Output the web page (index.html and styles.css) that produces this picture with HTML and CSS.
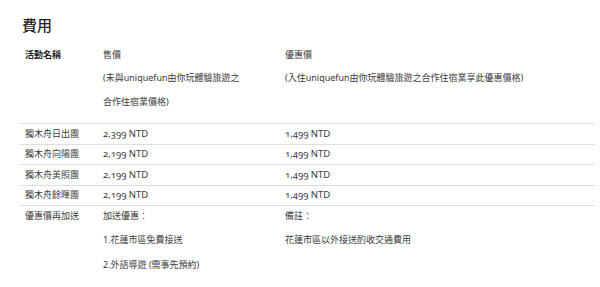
FILE: index.html
```html
<!DOCTYPE html>
<html lang="zh-Hant">
<head>
<meta charset="utf-8">
<title>費用</title>
<link rel="stylesheet" href="styles.css">
</head>
<body>
<section class="fees">
  <h2 class="fees-title">費用</h2>
  <table class="fee-table">
    <colgroup>
      <col class="col-name">
      <col class="col-price">
      <col class="col-deal">
    </colgroup>
    <tr class="head-row">
      <td class="head-name">活動名稱</td>
      <td>
        <div class="lines">
          <p>售價</p>
          <p>(未與uniquefun由你玩體驗旅遊之</p>
          <p>合作住宿業價格)</p>
        </div>
      </td>
      <td>
        <div class="lines">
          <p>優惠價</p>
          <p>(入住uniquefun由你玩體驗旅遊之合作住宿業享此優惠價格)</p>
        </div>
      </td>
    </tr>
    <tr>
      <td>獨木舟日出團</td>
      <td class="num">2,399 NTD</td>
      <td class="num">1,499 NTD</td>
    </tr>
    <tr>
      <td>獨木舟向陽團</td>
      <td class="num">2,199 NTD</td>
      <td class="num">1,499 NTD</td>
    </tr>
    <tr>
      <td>獨木舟美照團</td>
      <td class="num">2,199 NTD</td>
      <td class="num">1,499 NTD</td>
    </tr>
    <tr>
      <td>獨木舟餘暉團</td>
      <td class="num">2,199 NTD</td>
      <td class="num">1,499 NTD</td>
    </tr>
    <tr>
      <td>優惠價再加送</td>
      <td>
        <div class="lines">
          <p>加送優惠：</p>
          <p>1.花蓮市區免費接送</p>
          <p>2.外語導遊 (需事先預約)</p>
        </div>
      </td>
      <td>
        <div class="lines">
          <p>備註：</p>
          <p>花蓮市區以外接送酌收交通費用</p>
        </div>
      </td>
    </tr>
  </table>
</section>
</body>
</html>
```

FILE: styles.css
```css
html, body {
  margin: 0;
  padding: 0;
  background: #ffffff;
}

body {
  font-family: "Noto Sans", "Noto Sans CJK TC", sans-serif;
  color: #3a3a3a;
  font-size: 9px;
}

.fees {
  padding: 15px 5px 0 20px;
}

.fees-title {
  margin: 0;
  font-size: 15px;
  line-height: 20px;
  font-weight: 500;
  color: #222222;
  padding-left: 2px;
}

.fee-table {
  margin-top: 8px;
  width: 575px;
  border-collapse: collapse;
  table-layout: fixed;
}

.col-name { width: 78px; }
.col-price { width: 182px; }

.fee-table td {
  padding: 1.75px 5px;
  line-height: 16px;
  vertical-align: top;
  border-top: 1px solid #dedede;
  white-space: nowrap;
}

.fee-table .head-row td {
  border-top: none;
  padding-top: 3.5px;
  padding-bottom: 13.5px;
}

.head-name {
  font-weight: 700;
  color: #222222;
}

.num {
  font-variant-numeric: oldstyle-nums;
  font-size: 9.5px;
}

.lines p {
  margin: 0;
}

.lines p + p {
  margin-top: 8.5px;
}

.head-row .lines p + p {
  margin-top: 7.5px;
}
```
